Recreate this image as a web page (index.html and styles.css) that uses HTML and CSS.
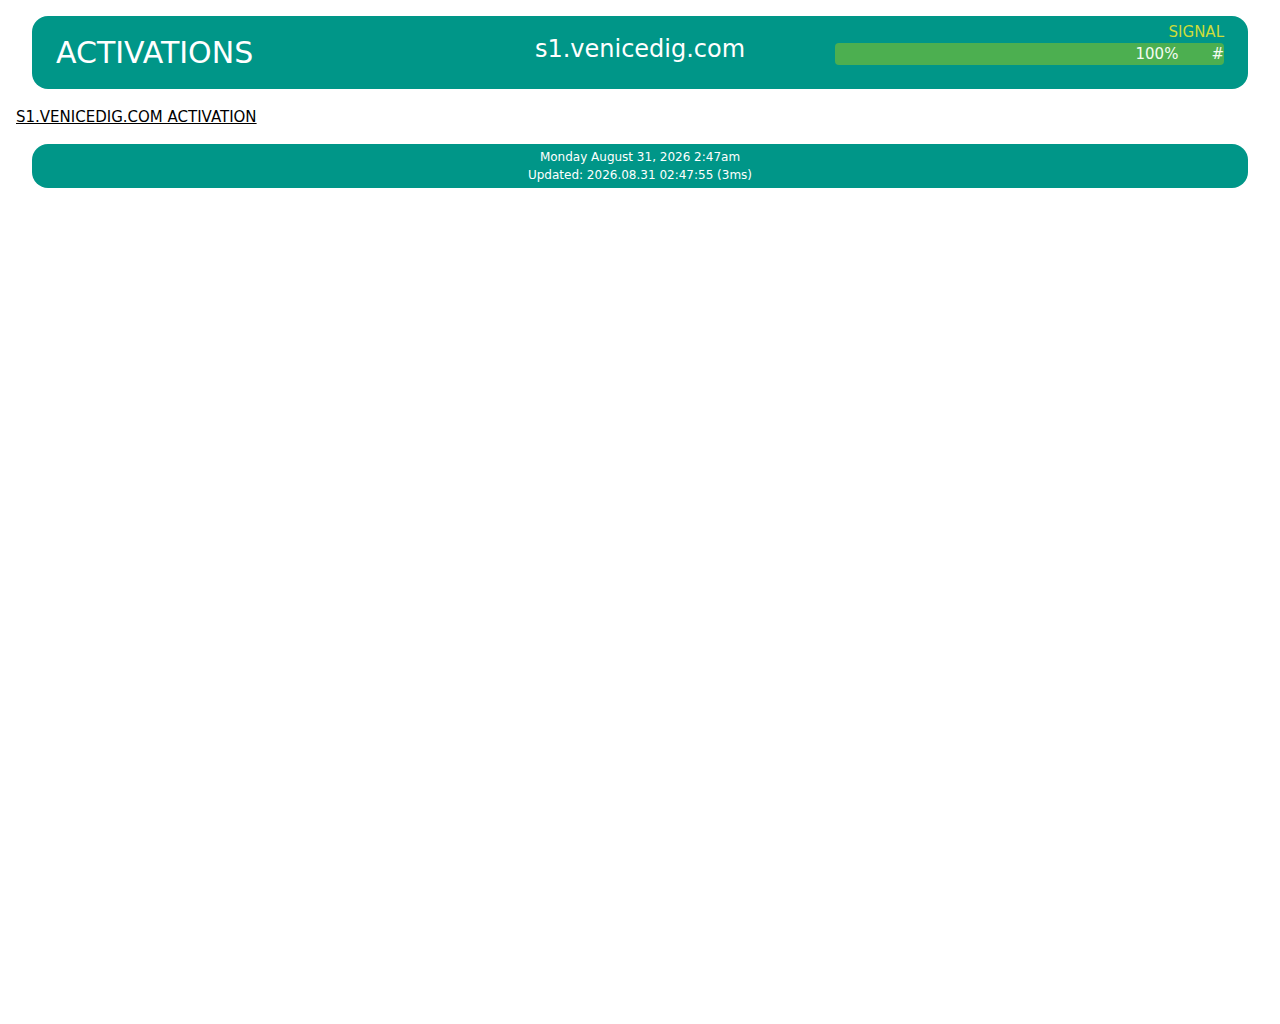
FILE: index.html
```html
<!DOCTYPE html>
<html lang="en">
<head>
<meta charset="utf-8">
<title>s1.venicedig.com activations</title>
<link rel="stylesheet" href="styles.css">
</head>
<body>
  <header class="topbar">
    <div class="topbar-title">ACTIVATIONS</div>
    <div class="topbar-host">s1.venicedig.com</div>
    <div class="signal">
      <div class="signal-label">SIGNAL</div>
      <div class="signal-bar">
        <span class="signal-value">100%</span>
        <span class="signal-hash">#</span>
      </div>
    </div>
  </header>

  <p class="section-link"><a href="#">S1.VENICEDIG.COM ACTIVATION</a></p>

  <footer class="status">
    <div>Monday August 31, 2026 2:47am</div>
    <div>Updated: 2026.08.31 02:47:55 (3ms)</div>
  </footer>
</body>
</html>
```

FILE: styles.css
```css
html, body {
  margin: 0;
  padding: 0;
  background: #ffffff;
}

body {
  padding: 16px;
  font-family: "DejaVu Sans", "Liberation Sans", sans-serif;
  color: #000;
}

.topbar {
  margin: 0 16px;
  height: 73px;
  box-sizing: border-box;
  padding: 8px 24px 0;
  background: #009688;
  border-radius: 16px;
  color: #ffffff;
  display: grid;
  grid-template-columns: 1fr 1fr 1fr;
  align-items: start;
}

.topbar-title {
  font-size: 30px;
  margin-top: 11px;
  line-height: normal;
}

.topbar-host {
  font-size: 24px;
  text-align: center;
  margin-top: 11px;
  line-height: normal;
}

.signal {
  display: flex;
  flex-direction: column;
  font-size: 15px;
}

.signal-label {
  text-align: right;
  color: #cddc39;
  line-height: 17.5px;
  margin-bottom: 1.5px;
}

.signal-bar {
  height: 22px;
  line-height: 22px;
  background: #4caf50;
  border-radius: 4px;
  display: flex;
  justify-content: flex-end;
  color: #f4fbf2;
}

.signal-hash {
  margin-left: 33px;
}

.section-link {
  margin: 20px 0 17.5px;
  font-size: 15px;
  line-height: 17.5px;
}

.section-link a {
  color: #000;
  text-decoration: underline;
}

.status {
  margin: 0 16px;
  padding: 4px 0;
  background: #009688;
  border-radius: 16px;
  color: #ffffff;
  text-align: center;
  font-size: 12px;
  line-height: 18px;
}
```
